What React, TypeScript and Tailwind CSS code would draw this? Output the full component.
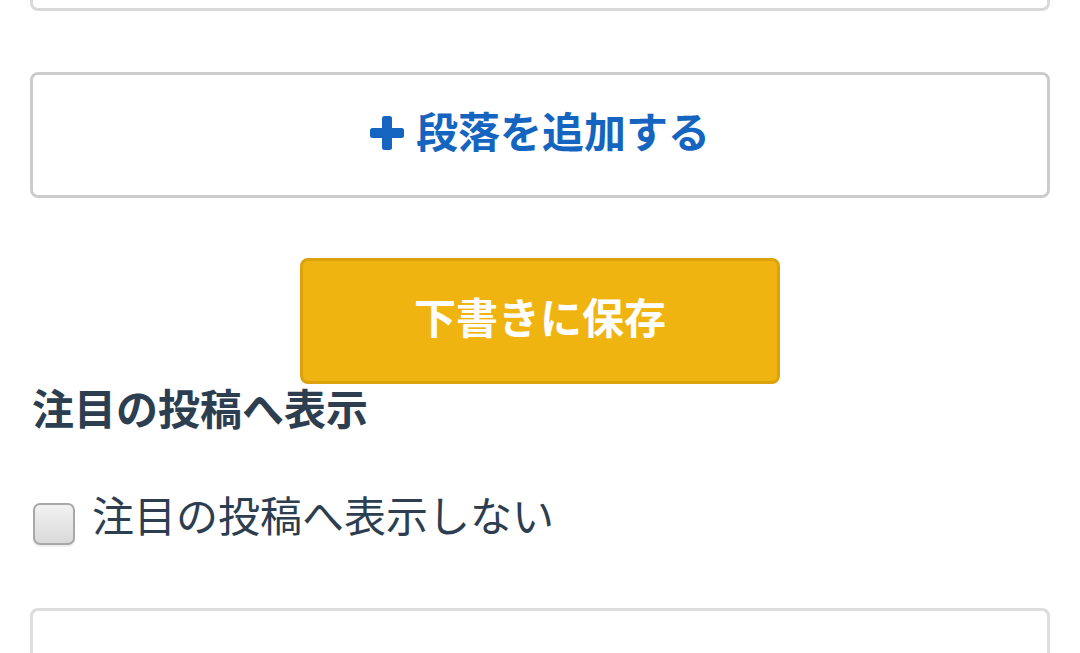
import React from "react";

const font = { fontFamily: '"Noto Sans CJK JP", "Noto Sans", sans-serif' };

export default function App() {
  return (
    <div className="w-[1080px] h-[653px] overflow-hidden bg-white px-[30px]" style={font}>
      <div className="h-[11px] border-x-[3px] border-b-[3px] border-[#d9d9d9] rounded-b-[8px]" />
      <button className="mt-[61px] w-full h-[126px] pb-[10px] border-[3px] border-[#cccccc] rounded-[8px] bg-white flex items-center justify-center gap-[12px] text-[#1565c0] font-bold text-[42px] leading-none">
        <svg width="34" height="34" viewBox="0 0 34 34" className="mt-[6px]">
          <rect x="0" y="12" width="34" height="10" rx="2.5" fill="#1565c0" />
          <rect x="12" y="0" width="10" height="34" rx="2.5" fill="#1565c0" />
        </svg>
        <span>段落を追加する</span>
      </button>
      <div className="mt-[60px] flex justify-center">
        <button className="w-[480px] h-[126px] pb-[10px] bg-[#f0b411] border-[3px] border-[#dba20c] rounded-[8px] text-white font-bold text-[42px] leading-none flex items-center justify-center">
          下書きに保存
        </button>
      </div>
      <h2 className="pl-[2px] mt-[-2px] font-bold text-[42px] leading-[50px] text-[#2c3e50]">注目の投稿へ表示</h2>
      <label className="mt-[63px] flex items-start gap-[17px] pl-[3px]">
        <span className="mt-[8px] w-[42px] h-[42px] rounded-[7px] border-[2px] border-[#a8a8a8] bg-gradient-to-b from-[#f2f2f2] to-[#d9d9d9] shadow-[0_2px_0_#eeeeee]" />
        <span className="mt-[-6px] text-[42px] leading-[50px] text-[#2c3e50]">注目の投稿へ表示しない</span>
      </label>
      <div className="mt-[63px] h-[80px] border-[3px] border-[#dddddd] rounded-[8px]" />
    </div>
  );
}
